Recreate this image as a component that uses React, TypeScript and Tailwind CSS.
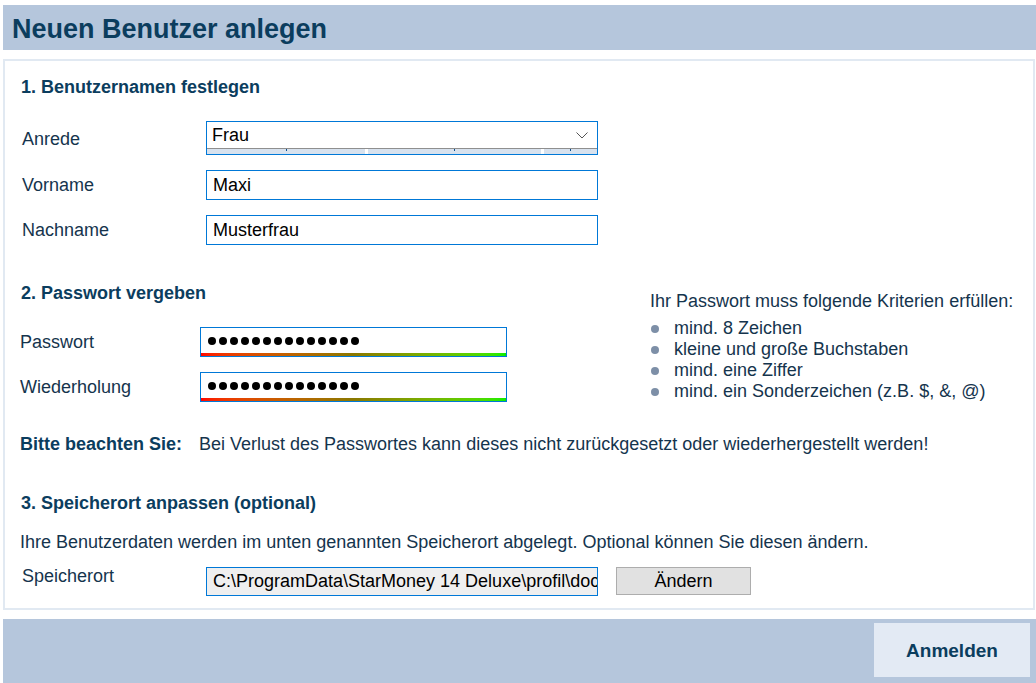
const criteria = [
  "mind. 8 Zeichen",
  "kleine und große Buchstaben",
  "mind. eine Ziffer",
  "mind. ein Sonderzeichen (z.B. $, &, @)",
]

function Dots() {
  return (
    <div className="flex gap-[3px] items-center">
      {Array.from({ length: 14 }).map((_, i) => (
        <span key={i} className="w-[8px] h-[8px] rounded-full bg-black" />
      ))}
    </div>
  )
}

function PasswordField() {
  return (
    <div className="w-[307px] h-[30px] border border-[#0078d7] flex flex-col bg-white">
      <div className="flex-1 flex items-center pl-[7px]">
        <Dots />
      </div>
      <div className="h-[3px] bg-linear-to-r from-[#ff0000] via-[#8a7800] to-[#00ee00]" />
    </div>
  )
}

function TextField({ value }: { value: string }) {
  return (
    <div className="w-[392px] h-[30px] border border-[#0078d7] bg-white flex items-center pl-[6px] text-black">
      {value}
    </div>
  )
}

function Select() {
  return (
    <div className="w-[392px] h-[34px] border border-[#0078d7] bg-white flex flex-col">
      <div className="flex-1 flex items-center justify-between pl-[5px] pr-[9px] pt-[1px] text-black">
        <span>Frau</span>
        <svg width="12" height="7" viewBox="0 0 12 7" fill="none" stroke="#555" strokeWidth="1">
          <path d="M0.5 0.5 L6 6 L11.5 0.5" />
        </svg>
      </div>
      <div className="h-[1px] bg-[#8f8f8f]" />
      <div className="h-[5px] flex gap-[3px] bg-white">
        <div className="w-[158px] bg-[#d8e2ee] flex justify-center"><span className="w-[1px] h-[2px] bg-[#0d4f8a]" /></div>
        <div className="w-[173px] bg-[#d8e2ee] flex justify-center"><span className="w-[1px] h-[2px] bg-[#0d4f8a]" /></div>
        <div className="flex-1 bg-[#d8e2ee] flex justify-center"><span className="w-[1px] h-[2px] bg-[#0d4f8a]" /></div>
      </div>
    </div>
  )
}

export default function App() {
  return (
    <div className="w-[1036px] h-[683px] pl-[3px] bg-white flex flex-col text-[18px] leading-[21px] text-[#15344d] font-['Liberation_Sans',Arial,sans-serif]">
      <div className="mt-[5px] h-[45px] bg-[#b5c6dc] pl-[9px] pt-[3px] flex items-center">
        <h1 className="text-[27px] font-bold text-[#0b3d5e] leading-none">Neuen Benutzer anlegen</h1>
      </div>

      <div className="mt-[9px] h-[551px] mr-[1px] border-2 border-[#e1e9f2] pl-[16px] pt-[16px] flex flex-col">
        <h2 className="font-bold text-[#0b3d5e]">1. Benutzernamen festlegen</h2>

        <div className="mt-[23px] flex items-center">
          <span className="w-[185px] pl-[1px] pt-[2px]">Anrede</span>
          <Select />
        </div>
        <div className="mt-[15px] flex items-center">
          <span className="w-[185px] pl-[1px]">Vorname</span>
          <TextField value="Maxi" />
        </div>
        <div className="mt-[15px] flex items-center">
          <span className="w-[185px] pl-[1px] pt-[1px]">Nachname</span>
          <TextField value="Musterfrau" />
        </div>

        <div className="mt-[38px] flex">
          <div className="w-[629px] flex flex-col">
            <h2 className="font-bold text-[#0b3d5e]">2. Passwort vergeben</h2>
            <div className="mt-[23px] flex items-center">
              <span className="w-[180px] -ml-[1px]">Passwort</span>
              <PasswordField />
            </div>
            <div className="mt-[15px] flex items-center">
              <span className="w-[180px] -ml-[1px] pt-[1px]">Wiederholung</span>
              <PasswordField />
            </div>
          </div>
          <div className="mt-[8px] flex flex-col">
            <p>Ihr Passwort muss folgende Kriterien erfüllen:</p>
            <ul className="mt-[6px] flex flex-col">
              {criteria.map((c) => (
                <li key={c} className="flex items-center">
                  <span className="ml-[1px] w-[8px] h-[8px] rounded-full bg-[#7d8fa7]" />
                  <span className="ml-[15px]">{c}</span>
                </li>
              ))}
            </ul>
          </div>
        </div>

        <div className="mt-[32px] flex">
          <span className="w-[179px] -ml-[1px] font-bold text-[#0b3d5e]">Bitte beachten Sie:</span>
          <span>Bei Verlust des Passwortes kann dieses nicht zurückgesetzt oder wiederhergestellt werden!</span>
        </div>

        <h2 className="mt-[38px] font-bold text-[#0b3d5e]">3. Speicherort anpassen (optional)</h2>
        <p className="mt-[18px] -ml-[1px]">
          Ihre Benutzerdaten werden im unten genannten Speicherort abgelegt. Optional können Sie diesen ändern.
        </p>

        <div className="mt-[14px] flex items-start">
          <span className="w-[185px] pl-[1px] mt-[-1px]">Speicherort</span>
          <div className="w-[392px] h-[29px] border border-[#0078d7] bg-[#efefef] flex items-center pl-[6px] pr-[2px] text-black overflow-hidden whitespace-nowrap">
            {"C:\\ProgramData\\StarMoney 14 Deluxe\\profil\\doc"}
          </div>
          <button className="ml-[18px] w-[135px] h-[28px] border border-[#adadad] bg-[#e1e1e1] text-black flex items-center justify-center">
            Ändern
          </button>
        </div>
      </div>

      <div className="mt-[9px] flex-1 bg-[#b5c6dc] flex justify-end items-start pt-[4px] pr-[6px]">
        <button className="w-[156px] h-[54px] bg-[#e3eaf4] text-[19px] font-bold text-[#0b3d5e]">Anmelden</button>
      </div>
    </div>
  )
}
